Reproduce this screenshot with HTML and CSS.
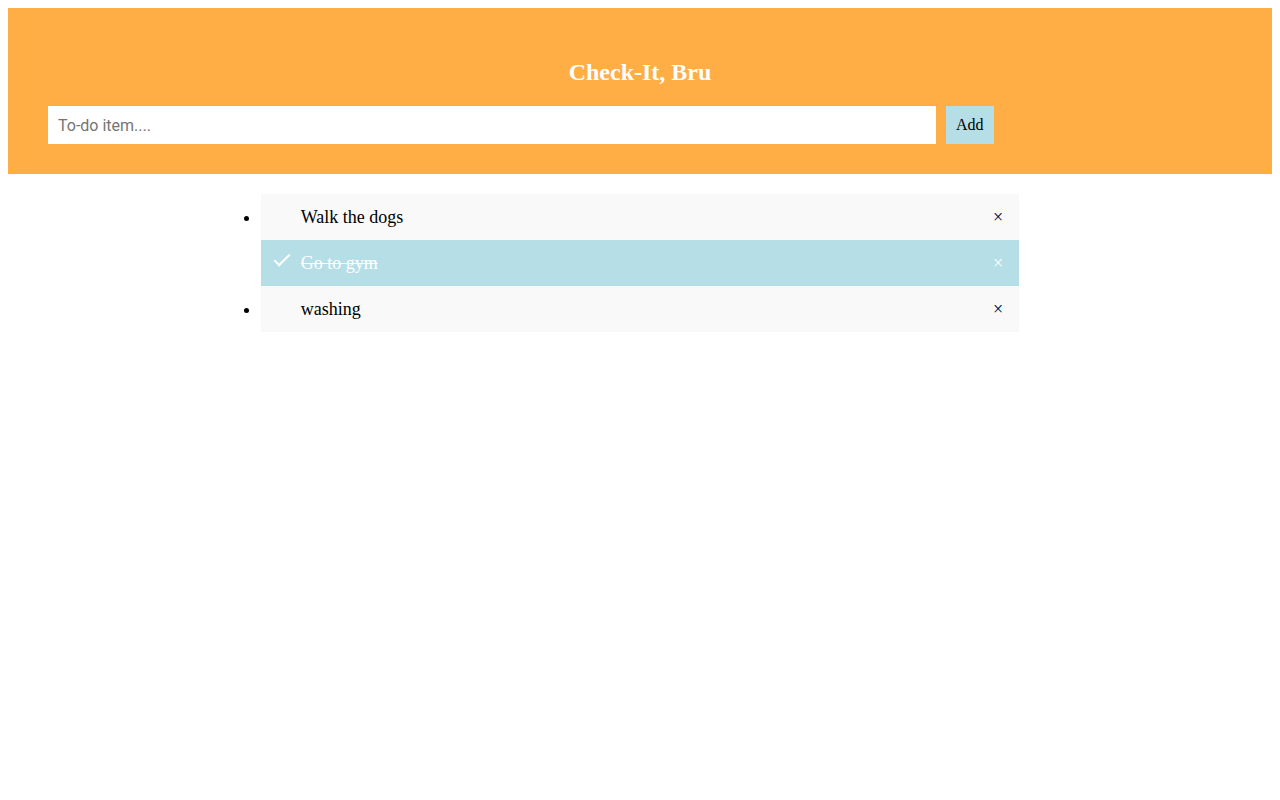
FILE: index.html
```html
<!DOCTYPE html>
<html>
<head>
<meta charset="utf-8">
<link rel="stylesheet" href="styles.css">
</head>
<body>
<div class="header">
  <h2 class="title">Check-It, Bru</h2>
  <div class="entry">
    <input class="entry-input" type="text" placeholder="To-do item....">
    <span class="add-btn">Add</span>
  </div>
</div>
<ul class="todo-list">
  <li class="todo-item">Walk the dogs<span class="close">×</span></li>
  <li class="todo-item checked">Go to gym<span class="close">×</span></li>
  <li class="todo-item">washing<span class="close">×</span></li>
</ul>
</body>
</html>
```
FILE: styles.css
```css
body {
  margin: 8px;
  font-family: "Liberation Serif", "Times New Roman", serif;
  background: #fff;
}
.header {
  background: #ffad45;
  padding: 30px 40px;
  color: #fff;
  text-align: center;
}
.title {
  margin: 20px 0;
  font-size: 24px;
  font-weight: bold;
  line-height: 28px;
}
.entry {
  display: flex;
  gap: 10px;
  align-items: stretch;
}
.entry-input {
  box-sizing: border-box;
  width: 75%;
  height: 38px;
  margin: 0;
  border: none;
  padding: 10px;
  font-family: Roboto, "Liberation Sans", Arial, sans-serif;
  font-size: 16px;
  color: #000;
  outline: none;
}
.entry-input::placeholder {
  color: #757575;
}
.add-btn {
  background: #b5dee6;
  color: #000;
  padding: 10px;
  font-size: 16px;
  line-height: 18px;
}
.todo-list {
  width: 60%;
  margin: 20px auto 0;
  padding: 0;
}
.todo-item {
  position: relative;
  padding: 12px 0 12px 40px;
  font-size: 18px;
  line-height: 22px;
  background: #f9f9f9;
  color: #000;
}
.todo-item.checked {
  list-style: none;
  background: #b5dee6;
  color: #fff;
  text-decoration: line-through;
}
.todo-item.checked::before {
  content: "";
  position: absolute;
  left: 13px;
  top: 14px;
  width: 14px;
  height: 6px;
  border-left: 2px solid #fff;
  border-bottom: 2px solid #fff;
  transform: rotate(-45deg);
}
.close {
  float: right;
  padding: 0 16px;
  text-decoration: none;
  display: inline-block;
}
```
